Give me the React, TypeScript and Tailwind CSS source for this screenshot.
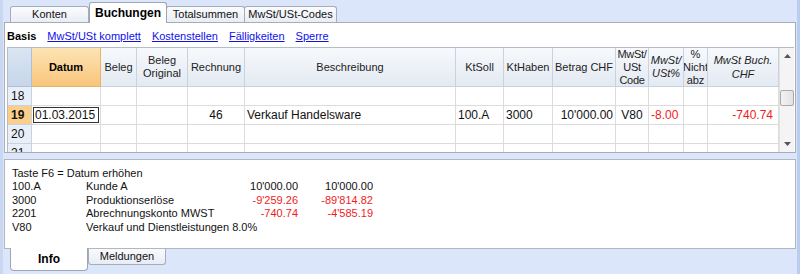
const headCell = "border-r border-b border-[#c9d3e0] bg-gradient-to-b from-[#f7f9fc] to-[#e4eaf3] flex items-center justify-center text-center text-[11px] leading-[13px] text-[#222] overflow-hidden";
const cell = "border-r border-b border-[#dcdcdc] h-[19px] flex items-center px-[2px] text-[12px] whitespace-nowrap overflow-hidden";

const cols = "grid grid-cols-[24px_69px_36px_51px_57px_211px_48px_49px_63px_33px_35px_24px_71px]";

function TopTab({ label, active }: { label: string; active?: boolean }) {
  if (active) {
    return (
      <div className="relative z-10 w-[78px] h-[21px] -mb-px bg-white border border-b-0 border-[#9ca6b5] rounded-t-[3px] flex items-center justify-center font-bold text-[12px] text-black">
        {label}
      </div>
    );
  }
  return (
    <div className="w-[79px] h-[16px] bg-gradient-to-b from-[#fbfcfe] to-[#e9edf5] border border-b-0 border-[#a4adbb] rounded-t-[3px] flex items-center justify-center text-[11px] text-[#111] -ml-px first:ml-0">
      {label}
    </div>
  );
}

function GridRow({ n, active, children }: { n: number; active?: boolean; children?: React.ReactNode }) {
  return (
    <div className={cols}>
      <div className={`border-r border-b border-[#c9d3e0] h-[19px] flex items-center pl-[3px] text-[12px] ${active ? "bg-[#f9cf8a] font-bold" : "bg-[#e9eff8]"}`}>
        {n}
      </div>
      {children ??
        Array.from({ length: 12 }).map((_, i) => <div key={i} className={cell} />)}
    </div>
  );
}

function InfoLine({ code, text, a, b, red }: { code: string; text: string; a?: string; b?: string; red?: boolean }) {
  return (
    <div className="flex h-[13.5px] items-center whitespace-nowrap">
      <div className="w-[74px]">{code}</div>
      <div className="w-[134px]">{text}</div>
      <div className={`w-[78px] text-right ${red ? "text-[#f01c1c]" : ""}`}>{a}</div>
      <div className={`w-[75px] text-right ${red ? "text-[#f01c1c]" : ""}`}>{b}</div>
    </div>
  );
}

export default function App() {
  return (
    <div className="w-[800px] h-[274px] overflow-hidden bg-[#dce6fb] border-l-[3px] border-r-[3px] border-l-[#c9d7f0] border-r-[#b9cdf0] flex flex-col font-['Liberation_Sans',Arial,sans-serif] text-[11px] text-[#111]">
      {/* top tabs */}
      <div className="flex items-end h-[22px] pl-[7px] shrink-0">
        <TopTab label="Konten" />
        <TopTab label="Buchungen" active />
        <TopTab label="Totalsummen" />
        <div className="w-[93px] h-[16px] bg-gradient-to-b from-[#fbfcfe] to-[#e9edf5] border border-b-0 border-[#a4adbb] rounded-t-[3px] flex items-center justify-center text-[11px] text-[#111] -ml-px">
          MwSt/USt-Codes
        </div>
      </div>

      {/* main panel */}
      <div className="ml-px mr-px h-[131px] bg-white border border-[#a8acb3] flex flex-col shrink-0">
        <div className="h-[24px] flex items-center gap-[11px] pl-[2px] pt-[2px] shrink-0">
          <span className="font-bold text-[11px] text-black">Basis</span>
          <span className="text-[#1010e8] underline">MwSt/USt komplett</span>
          <span className="text-[#1010e8] underline">Kostenstellen</span>
          <span className="text-[#1010e8] underline">Fälligkeiten</span>
          <span className="text-[#1010e8] underline">Sperre</span>
        </div>
        <div className="flex-1 flex ml-[2px] mr-px border-t border-l border-[#b4bcc8] overflow-hidden">
          <div className="w-[771px] flex flex-col">
            <div className={`${cols} h-[39px]`}>
              <div className="border-r border-b border-[#aebfd8] bg-gradient-to-b from-[#dbe5f3] to-[#c6d5ea]" />
              <div className="border-r border-b border-[#e8b46a] bg-gradient-to-b from-[#fde4b4] to-[#f8c57a] flex items-center justify-center font-bold text-[11px] text-black">
                Datum
              </div>
              <div className={headCell}>Beleg</div>
              <div className={headCell}>
                Beleg
                <br />
                Original
              </div>
              <div className={headCell}>Rechnung</div>
              <div className={headCell}>Beschreibung</div>
              <div className={headCell}>KtSoll</div>
              <div className={headCell}>KtHaben</div>
              <div className={headCell}>Betrag CHF</div>
              <div className={`${headCell} text-[10px] leading-[12px] tracking-[-0.3px]`}>
                MwSt/
                <br />
                USt
                <br />
                Code
              </div>
              <div className={`${headCell} italic text-[10px] leading-[13px]`}>
                MwSt/
                <br />
                USt%
              </div>
              <div className={`${headCell} text-[10px] leading-[12px]`}>
                %
                <br />
                Nicht
                <br />
                abz
              </div>
              <div className={`${headCell} italic leading-[14px]`}>
                MwSt Buch.
                <br />
                CHF
              </div>
            </div>
            <GridRow n={18} />
            <GridRow n={19} active>
              <div className="border-r border-b border-[#dcdcdc] h-[19px] p-px">
                <div className="h-full border border-[#333] flex items-center px-[1px] text-[12px]">01.03.2015</div>
              </div>
              <div className={cell} />
              <div className={cell} />
              <div className={`${cell} justify-center`}>46</div>
              <div className={cell}>Verkauf Handelsware</div>
              <div className={cell}>100.A</div>
              <div className={cell}>3000</div>
              <div className={`${cell} justify-end`}>10'000.00</div>
              <div className={`${cell} justify-center`}>V80</div>
              <div className={`${cell} text-[#f01c1c]`}>-8.00</div>
              <div className={cell} />
              <div className={`${cell} justify-end pr-[5px] text-[#f01c1c]`}>-740.74</div>
            </GridRow>
            <GridRow n={20} />
            <GridRow n={21} />
          </div>
          {/* scrollbar */}
          <div className="w-[17px] bg-[#f4f4f4] border-l border-[#e2e2e2] flex flex-col items-center">
            <div className="h-[16px] flex items-center justify-center">
              <svg width="7" height="4" viewBox="0 0 7 4">
                <path d="M0 4 L3.5 0 L7 4 Z" fill="#555" />
              </svg>
            </div>
            <div className="mt-[26px] w-[14px] h-[16px] bg-gradient-to-r from-[#f2f2f2] to-[#e2e2e2] border border-[#a9a9a9] rounded-[2px]" />
            <div className="mt-auto h-[16px] flex items-center justify-center">
              <svg width="7" height="4" viewBox="0 0 7 4">
                <path d="M0 0 L3.5 4 L7 0 Z" fill="#555" />
              </svg>
            </div>
          </div>
        </div>
      </div>

      {/* info panel */}
      <div className="mt-[6px] mx-px h-[90px] bg-white border border-[#b3b6bc] pl-[7px] pt-[6px] shrink-0 text-[11px]">
        <div className="h-[13.5px] flex items-center">Taste F6 = Datum erhöhen</div>
        <InfoLine code="100.A" text="Kunde A" a="10'000.00" b="10'000.00" />
        <InfoLine code="3000" text="Produktionserlöse" a="-9'259.26" b="-89'814.82" red />
        <InfoLine code="2201" text="Abrechnungskonto MWST" a="-740.74" b="-4'585.19" red />
        <InfoLine code="V80" text="Verkauf und Dienstleistungen 8.0%" />
      </div>

      {/* bottom tabs */}
      <div className="flex items-start pl-[7px] -mt-px shrink-0">
        <div className="w-[78px] h-[23px] bg-white border border-t-0 border-[#9ca6b5] rounded-b-[4px] flex items-center justify-center font-bold text-[12px] text-black">
          Info
        </div>
        <div className="w-[78px] h-[16px] mt-px bg-gradient-to-b from-[#f9fafd] to-[#e8ecf4] border border-t-0 border-[#a4adbb] rounded-b-[3px] flex items-center justify-center text-[11px]">
          Meldungen
        </div>
      </div>
    </div>
  );
}
